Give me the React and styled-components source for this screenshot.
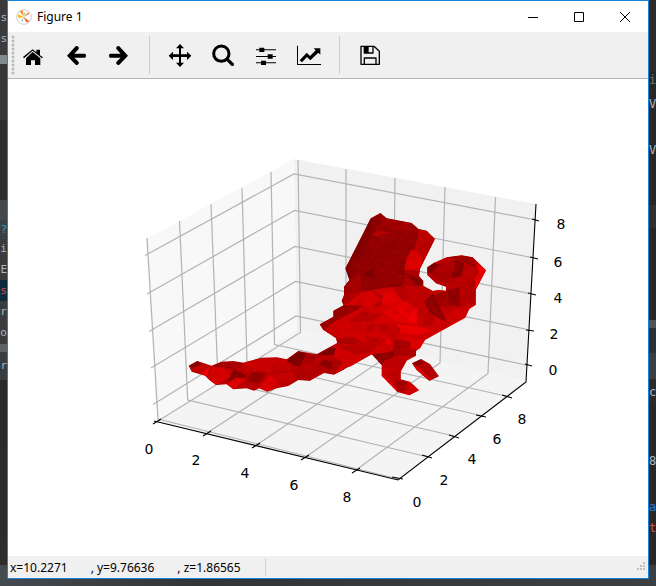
import React from "react";
import styled, { createGlobalStyle } from "styled-components";

const GlobalStyle = createGlobalStyle`
  * { box-sizing: border-box; }
  body { margin: 0; font-family: "Noto Sans", "Open Sans", sans-serif; font-size: 12px; color: #000; }
`;

const Desktop = styled.div`
  display: grid;
  grid-template-columns: 7px minmax(0, 1fr) 7px;
  grid-template-rows: 1fr auto;
  min-height: 100vh;
  background: #2b2b2b;
`;
const EditorStrip = styled.div`
  display: flex;
  flex-direction: column;
  overflow: hidden;
`;
const EditorLine = styled.div`
  display: flex;
  flex: none;
  align-items: center;
  justify-content: ${(p) => (p.$end ? "flex-end" : "flex-start")};
  height: ${(p) => p.$h}px;
  background: ${(p) => p.$bg || "transparent"};
  color: ${(p) => p.$color || "#a9b7c6"};
  font: ${(p) => (p.$end ? 11 : 12)}px/16px "DejaVu Sans Mono", monospace;
  white-space: pre;
  overflow: hidden;
`;
const DesktopFoot = styled.div`
  grid-column: 1 / -1;
  height: 7px;
  background: linear-gradient(90deg, #434a4f, #333435 30%, #3c3f41);
`;

const Window = styled.main`
  display: flex;
  flex-direction: column;
  border: 1px solid #1883d7;
  background: #fff;
  min-width: 0;
`;
const TitleBar = styled.header`
  display: flex;
  align-items: center;
  height: 31px;
  padding-left: 8px;
`;
const Title = styled.h1`
  flex: 1;
  margin: 0 0 0 5px;
  font-size: 12px;
  line-height: 16px;
  font-weight: 400;
`;
const WindowButton = styled.button`
  display: grid;
  place-items: center;
  width: 46px;
  height: 30px;
  padding: 0;
  border: 0;
  background: none;
`;
const Toolbar = styled.div`
  display: flex;
  align-items: center;
  height: 47px;
  background: #f0f0f0;
  border-bottom: 1px solid #b4b4b4;
`;
const Grip = styled.div`
  width: 8px;
  height: 40px;
  background: radial-gradient(circle at 5px 2px, #bdbdbd 1px, transparent 2px) 0 0 / 8px 4px;
`;
const Tools = styled.div`
  display: flex;
  align-items: center;
  gap: 9px;
`;
const ToolButton = styled.button`
  display: grid;
  width: 34px;
  height: 34px;
  padding: 0;
  border: 0;
  background: none;
`;
const Separator = styled.div`
  width: 9px;
  height: 38px;
  background: linear-gradient(#cdcdcd, #cdcdcd) center / 1px 100% no-repeat;
`;
const Canvas = styled.section`
  flex: 1;
  svg { display: block; width: 100%; height: auto; }
`;
const TickText = styled.text`
  font: 14px "DejaVu Sans", sans-serif;
  text-anchor: middle;
`;
const StatusBar = styled.footer`
  display: flex;
  align-items: center;
  justify-content: space-between;
  height: 22px;
  background: #f0f0f0;
`;
const Coordinates = styled.output`
  display: flex;
  align-items: center;
  gap: 23px;
  width: 258px;
  height: 18px;
  padding-left: 2px;
  border-right: 1px solid #d2d2d2;
  white-space: nowrap;
`;

const leftLines = [
  [10, "", "#3a3b3d"], [16, "s", "#3a3b3d"], [5, "", "#3a3b3d"], [16, "s", "#3a3b3d"],
  [8, "", "#3a3b3d"], [9, "", "#7f8b91"], [56, "", "#343638"], [80, "", "#2e2f31"],
  [20, "", "#46494b"], [19, "?", "#3a4246", "#299cc4"], [20, "gi", "#393b3d"],
  [21, "E", "#393b3d"], [21, "es", "#0d293e", "#c75450"], [21, "rr", "#3a3c3e"],
  [22, "to", "#3a3c3e"], [8, "", "#606366"], [28, "r", "#3a3d3f"],
  [185, "", "linear-gradient(#292929, #2d2d2d)"], [14, "", "#444a4e"],
];
const rightLines = [
  [71, "", "#2b2b2b"], [17, "i", "#272727", "#707070"], [6, "", "#272727"],
  [20, "V", "#272727"], [26, "", "#272727"], [20, "V", "#272727"], [45, "", "#272727"],
  [23, "", "#303030"], [92, "", "#272727"], [8, "", "#505254"], [25, "", "#2e3133"],
  [26, "", "#3c3f41"], [26, "c", "#2b2b2b"], [46, "", "#272727"], [20, "8", "#272727"],
  [26, "", "#272727"], [20, "a", "#272727", "#287bde"], [22, "t", "#272727", "#c75450"],
  [26, "", "#272727"], [14, "", "#3c3f41"],
];

function Strip({ lines, end }) {
  return (
    <EditorStrip aria-hidden="true">
      {lines.map(([h, text, bg, color], i) => (
        <EditorLine key={i} $h={h} $bg={bg} $color={color} $end={end}>{text}</EditorLine>
      ))}
    </EditorStrip>
  );
}

const tools = [
  ["Home", 48, <g key="i">
    <path d="M69 171 L98 148 L109 157 V149 H120 V166 L129 172 L126 175 L98 152 L72 175Z" />
    <path d="M98 156 L121 175 V195 H105 V181 H93 V195 H78 V175Z" />
  </g>],
  ["Back", 177, <path key="i" d="M201 167 L227 139 Q231 136 236 142 Q238 146 234 149 L223 161 H255 Q258 162 258 167 Q258 172 255 173 H223 L234 184 Q238 188 236 191 Q231 197 227 194Z" />],
  ["Forward", 306, <path key="i" transform="translate(585 0) scale(-1 1)" d="M201 167 L227 139 Q231 136 236 142 Q238 146 234 149 L223 161 H255 Q258 162 258 167 Q258 172 255 173 H223 L234 184 Q238 188 236 191 Q231 197 227 194Z" />],
  null,
  ["Pan", 489, <path key="i" d="M540 132 L552 145 H543 V163 H561 V155 L574 167 L561 180 V171 H543 V188 H552 L540 201 L528 188 H537 V171 H519 V180 L506 167 L519 155 V163 H537 V145 H528Z" />],
  ["Zoom", -12, <g key="i" fill="none" stroke="#000">
    <circle cx="34" cy="161" r="23" strokeWidth="9" /><path d="M52 178 L67 193" strokeWidth="10" strokeLinecap="round" />
  </g>],
  ["Subplots", 117, <g key="i">
    <path d="M138 148H198V151H138ZM138 168H198V171H138ZM138 187H198V190H138Z" />
    <path d="M148 143H163V156H148ZM173 163H188V176H173ZM153 182H168V195H153Z" />
  </g>],
  ["Edit axes", 246, <g key="i">
    <path d="M261 137H264V192H333V195H261Z" />
    <path d="M269 181 L290 158 L300 168 L317 151 L311 145 H331 V164 L325 158 L301 181 L291 171 L276 187Z" />
  </g>],
  null,
  ["Save", 429, <g key="i">
    <path fill="none" stroke="#000" strokeWidth="4" strokeLinejoin="round" d="M453 139 H492 L508 154 V193 H453ZM463 193 V174 H498 V193M463 139 V159 H489 V139" />
    <path d="M463 139H476V159H463Z" />
  </g>],
];

/* pane outlines, grid polylines and tick strokes of the 3D axes */
const grid = [
  "428,457 187.7,400 179.5,221", "454,436 218,381 211,204", "481,415.5 247,362 242,188",
  "508,396.5 274.5,344.5 271,172", "398,479 158,419 147,238",
  "158,421 300.5,332.5 298,160", "207,433 346,342 346,169", "256,445.5 393,352.5 395,178",
  "305,457.5 440,363 445,187", "356,470 488,373.5 495.5,197",
  "145,255.5 294,174 536,220", "147,294 294.5,210.5 534,258", "149,331.5 295,246.5 532,294",
  "151,368 295.5,281.5 530,330", "153,404.5 296,316 528,365.5",
];
const tickMarks = "M153 424l8-5M203 436l8-5M252 448l8-5M301 460l8-5M352 473l8-5M392 477l11 2M422 455l10 3M449 435l10 3M476 415l10 2M502 395l10 3M532 219l7 2M530 257l8 2M528 293l8 2M526 330l8 1M525 364l7 2";
const labels = [
  [149, 454, 0], [196, 465, 2], [245, 478, 4], [294, 490, 6], [347, 502, 8],
  [417, 507, 0], [444, 485, 2], [472, 464, 4], [497, 444, 6], [522, 424, 8],
  [553, 375, 0], [554, 339, 2], [558, 303, 4], [558, 267, 6], [561, 229, 8],
];

/* mesh silhouettes and facets, drawn at a third of their own units */
const wing = "182,55 211,39 230,55 305,69 326,87 350,92 375,117 330,207 327,228 340,243 340,258 368,273 370,300 240,340 102,320 95,302 102,285 102,260 118,240 106,205";
const body = "102,290 135,278 185,270 240,262 340,258 368,273 385,270 408,272 408,260 378,250 352,225 352,202 372,188 410,172 455,166 488,172 528,211 497,270 497,315 478,327 466,353 345,420 330,445 318,453 318,467 290,482 272,515 272,538 300,545 327,571 298,586 262,576 215,527 215,495 185,463 120,500 70,470 82,430 78,415 40,390 29,373 70,350 70,332 102,315";
const foot = "306,490 333,477 360,492 387,529 358,543 320,510";
const tail = "26,107 52,93 95,107 125,95 160,93 190,98 245,83 290,82 320,88 355,63 410,73 470,40 520,15 600,40 575,73 462,134 432,129 390,152 355,150 325,168 290,175 262,185 238,175 222,182 200,175 160,178 140,163 108,165 88,150 75,137 35,125";

const wingFacets = [
  ["#a00000", "211,39 230,55 305,69 322,95 255,90 215,78"],
  ["#b50000", "182,105 205,92 243,98 200,108"],
  ["#bd0000", "322,87 350,92 375,117 330,207 327,228 300,190 285,175 312,148 325,110"],
  ["#c80000", "300,150 325,150 340,178 300,190"],
  ["#dd0000", "310,148 340,182 327,212 283,210 287,185"],
  ["#ad0000", "283,212 327,214 327,228 340,243 300,262 270,275 285,240"],
  ["#850000", "106,205 165,95 182,55 190,105 145,205 118,240"],
  ["#760000", "160,225 195,200 190,235"],
  ["#a50000", "102,260 118,240 150,215 155,275 102,300"],
  ["#840000", "285,220 340,243 320,255"],
];
const bodyFacets = [
  ["#b90000", "352,202 410,172 488,172 528,211 497,270 497,315 448,320 410,345 408,260 378,250 352,225"],
  ["#830000", "352,202 372,188 385,194 365,222 352,218"],
  ["#a80000", "385,194 437,180 425,232 400,248 372,240 365,222"],
  ["#850000", "437,180 462,190 455,228 425,235"],
  ["#a00000", "410,172 455,166 488,172 500,205 462,186"],
  ["#ef0000", "500,190 528,211 497,270 490,242 507,215"],
  ["#920000", "412,270 450,260 450,320 415,315"],
  ["#b40000", "455,215 497,245 497,315 450,320"],
  ["#c10000", "240,262 340,258 368,273 385,270 408,272 415,345 350,360 290,300"],
  ["#890000", "335,310 370,280 400,345 410,367 370,345"],
  ["#a30000", "370,285 408,275 418,325 385,318"],
  ["#b00000", "102,290 135,278 185,270 225,290 210,318 130,325 102,310"],
  ["#d40000", "110,312 155,277 185,273 215,300 185,325 115,325"],
  ["#e20000", "220,285 250,275 295,318 250,330 215,310"],
  ["#bf0000", "255,275 330,280 355,330 300,322"],
  ["#970000", "70,332 102,315 160,317 115,345 70,350"],
  ["#990000", "29,373 70,350 110,345 75,365 40,390"],
  ["#e60000", "220,335 290,305 330,335 320,370 270,370"],
  ["#f00000", "275,345 325,335 320,373"],
  ["#c10000", "320,335 345,325 375,365 345,395 320,370"],
  ["#940000", "365,300 410,363 385,350 358,325"],
  ["#b80000", "115,365 155,335 215,342 185,365"],
  ["#c10000", "170,370 255,373 270,400 245,405 165,390"],
  ["#e80000", "255,373 330,380 365,390 330,405 270,398"],
  ["#bb0000", "164,405 205,417 215,435 170,432"],
  ["#f10000", "226,408 243,422 240,435 225,430"],
  ["#b90000", "255,374 270,385 270,400 256,395"],
  ["#ac0000", "82,430 78,415 125,410 165,430 125,433"],
  ["#a40000", "252,418 302,425 300,448 248,450"],
  ["#b80000", "95,445 145,427 205,433 185,453 140,465"],
  ["#dc0000", "277,410 345,420 330,445 302,445 300,425"],
  ["#8c0000", "185,463 220,459 255,451 253,470 223,483 215,495"],
  ["#c30000", "223,483 255,468 290,482 272,515 272,538 262,565 215,527"],
  ["#e70000", "215,520 245,550 272,576 262,576 215,527"],
  ["#a60000", "258,545 280,540 292,550 282,573 262,576"],
  ["#cd0000", "292,550 318,556 327,571 298,586 280,575"],
  ["#a60000", "250,452 318,447 318,467 290,472 255,465"],
];
const footFacets = [["#8f0000", "306,490 333,477 340,490 315,500"], ["#d90000", "306,490 322,500 360,533 358,543 320,510"]];
const tailFacets = [
  ["#850000", "26,107 52,93 65,105 40,113"], ["#cb0000", "35,115 65,105 80,120 75,135"],
  ["#ed0000", "65,130 90,108 82,140"], ["#a70000", "90,110 120,97 190,98 180,122 130,112"],
  ["#dd0000", "82,145 98,112 132,113 152,143 108,165"], ["#cc0000", "130,115 158,120 150,142"],
  ["#890000", "140,155 163,118 200,137 180,146"], ["#df0000", "140,163 170,142 200,148 160,178"],
  ["#c20000", "165,118 210,105 230,125 200,135"], ["#960000", "200,155 215,125 257,132 238,160"],
  ["#c90000", "190,98 245,83 320,88 330,120 290,125 215,122"],
  ["#dc0000", "238,175 268,135 305,165 262,185"], ["#c10000", "268,135 335,125 343,150 305,165"],
  ["#7c0000", "320,92 355,63 378,72 360,110 340,105"], ["#a70000", "378,72 410,75 400,100 365,108"],
  ["#b00000", "340,125 365,108 415,130 390,152 355,150"], ["#820000", "410,75 450,52 500,58 500,80 455,75"],
  ["#8b0000", "415,105 430,88 468,98 450,120"], ["#aa0000", "455,93 480,75 515,82 490,125 460,130"],
  ["#d60000", "490,95 575,60 575,73 462,134"], ["#880000", "468,25 510,25 508,45 472,48"],
  ["#bd0000", "472,48 508,45 530,65 480,75"], ["#d70000", "500,45 600,35 590,65 540,72"],
];

/* small surface triangles that subdivide the larger facets */
function makeMesh(x0, y0, x1, y1, step, seed, strength) {
  let s = seed;
  const random = () => {
    s = (s * 16807) % 2147483647;
    return s / 2147483647;
  };
  const cols = Math.ceil((x1 - x0) / step) + 1;
  const rows = Math.ceil((y1 - y0) / step) + 1;
  const at = Array.from({ length: rows }, (_, r) => Array.from({ length: cols }, (_, c) =>
    `${Math.round(x0 + c * step + (r % 2) * step / 2 + random() * 10)},${Math.round(y0 + r * step + random() * 10)}`));
  const out = [];
  for (let r = 0; r < rows - 1; r++) {
    for (let c = 0; c < cols - 1; c++) {
      [[at[r][c], at[r][c + 1], at[r + 1][c]], [at[r][c + 1], at[r + 1][c + 1], at[r + 1][c]]].forEach((tri) => {
        const v = random();
        out.push({ points: tri.join(" "), fill: v < 0.5 ? "#500000" : "#ff0000", opacity: Math.abs(v - 0.5) * strength });
      });
    }
  }
  return out;
}

function Surface({ id, outline, base, facets, mesh = [] }) {
  return (
    <g>
      <clipPath id={id}><polygon points={outline} /></clipPath>
      <polygon points={outline} fill={base} />
      <g clipPath={`url(#${id})`}>
        {facets.map(([fill, points], i) => <polygon key={i} points={points} fill={fill} />)}
        {mesh.map((m, i) => <polygon key={i} {...m} />)}
      </g>
    </g>
  );
}
const wingMesh = makeMesh(90, 30, 390, 340, 24, 7, 0.15);
const bodyMesh = makeMesh(20, 160, 540, 600, 26, 31, 0.2);
const tailMesh = makeMesh(10, 0, 610, 190, 25, 53, 0.2);

function Plot() {
  return (
    <svg viewBox="8 79 640 477" role="img" aria-label="3D surface plot">
      <polygon points="146,239 294,159 297,330 157,422" fill="#f8f8f8" />
      <polygon points="294,159 536,204 526,381 297,330" fill="#f1f1f1" />
      <polygon points="157,422 297,330 526,381 398,480" fill="#f4f4f4" />
      <g fill="none" stroke="#b3b3b3" strokeWidth="1.2">
        {grid.map((points) => <polyline key={points} points={points} />)}
      </g>
      <path d="M154 421L398 480L526 382L536 204" fill="none" stroke="#000" strokeWidth="1.1" />
      <path d={tickMarks} stroke="#000" strokeWidth="1.1" />
      {labels.map(([x, y, n]) => <TickText key={`${x}-${y}`} x={x} y={y}>{n}</TickText>)}
      <g transform="translate(180 330) scale(.33333)">
        <Surface id="tail" outline={tail} base="#b70000" facets={tailFacets} mesh={tailMesh} />
      </g>
      <g transform="translate(310 200) scale(.33333)">
        <Surface id="wing" outline={wing} base="#900000" facets={wingFacets} mesh={wingMesh} />
        <path d="M125 225L215 60M145 245L245 65M165 260L270 75M190 270L295 75M215 275L315 90M240 275L330 105M130 195L290 230M145 165L310 200M160 135L320 165M180 105L335 130" stroke="#d33" strokeWidth="2" strokeDasharray="4 5" opacity=".3" />
        <Surface id="body" outline={body} base="#cf0000" facets={bodyFacets} mesh={bodyMesh} />
        <Surface id="foot" outline={foot} base="#b30000" facets={footFacets} />
      </g>
    </svg>
  );
}

function AppIcon() {
  return (
    <svg width="16" height="16" viewBox="48 21 48 48" aria-hidden="true">
      <circle cx="72" cy="45" r="22" fill="#fff" stroke="#ccc" strokeWidth="3" />
      <path d="M72 45L54 39L56 49Z" fill="#f6b51e" />
      <path d="M72 45L59 28L68 25Z" fill="#f58a3c" />
      <path d="M70 44L55 36L53 45Z" fill="#f7c82f" />
      <path d="M70 44L80 62L88 57Z" fill="#ee6a35" />
      <path d="M72 45L85 31L88 35Z" fill="#e8713a" />
      <path d="M72 45L64 57L68 59Z" fill="#6fc2a0" />
      <path d="M72 45L73 31L77 33Z" fill="#a6ce6b" />
    </svg>
  );
}

const windowGlyphs = [
  ["Minimize", "M0 5.5H10"], ["Maximize", "M.5 .5H9.5V9.5H.5Z"], ["Close", "M0 0L10 10M10 0L0 10"],
];

export default function App() {
  return (
    <>
      <GlobalStyle />
      <Desktop>
        <Strip lines={leftLines} end />
        <Window>
          <TitleBar>
            <AppIcon />
            <Title>Figure 1</Title>
            {windowGlyphs.map(([name, d]) => (
              <WindowButton key={name} aria-label={name}>
                <svg width="10" height="10" viewBox="0 0 10 10"><path d={d} fill="none" stroke="#000" /></svg>
              </WindowButton>
            ))}
          </TitleBar>
          <Toolbar role="toolbar" aria-label="Figure tools">
            <Grip />
            <Tools>
              {tools.map((tool, i) => tool ? (
                <ToolButton key={tool[0]} aria-label={tool[0]}>
                  <svg width="34" height="34" viewBox={`${tool[1]} 114 102 102`}>{tool[2]}</svg>
                </ToolButton>
              ) : <Separator key={i} />)}
            </Tools>
          </Toolbar>
          <Canvas><Plot /></Canvas>
          <StatusBar>
            <Coordinates>
              <span>x=10.2271</span><span>, y=9.76636</span><span>, z=1.86565</span>
            </Coordinates>
            <svg width="12" height="12" viewBox="0 0 12 12" aria-hidden="true">
              <path d="M7 1h2v2h-2zM4 4h2v2h-2zM7 4h2v2h-2zM1 7h2v2h-2zM4 7h2v2h-2zM7 7h2v2h-2z" fill="#bfbfbf" />
            </svg>
          </StatusBar>
        </Window>
        <Strip lines={rightLines} />
        <DesktopFoot />
      </Desktop>
    </>
  );
}
